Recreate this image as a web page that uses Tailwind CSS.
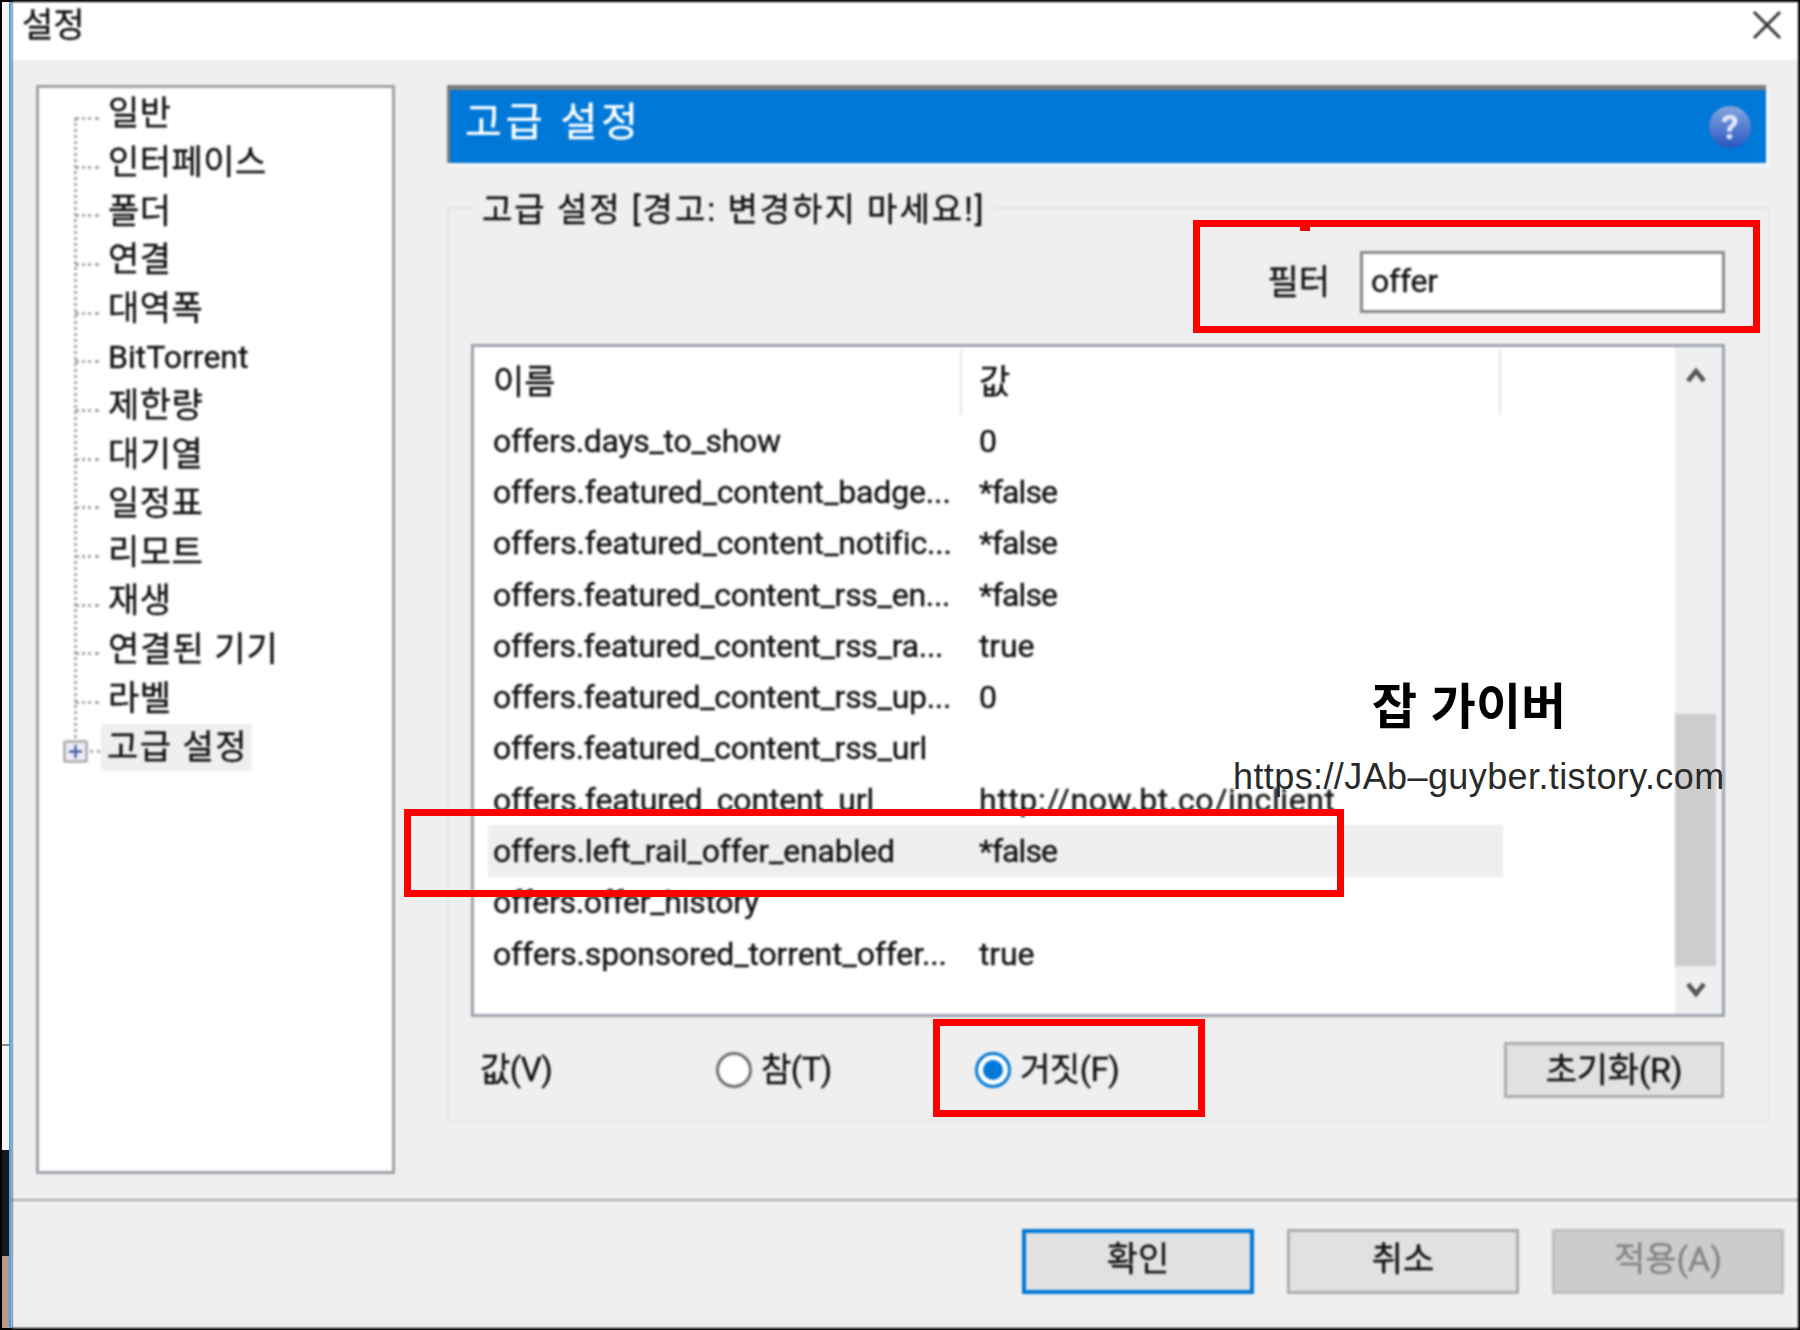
<!DOCTYPE html>
<html lang="ko">
<head>
    <meta charset="UTF-8">
    <title>설정</title>
    <script src="https://cdn.jsdelivr.net/npm/@tailwindcss/browser@4"></script>
</head>
<body class="bg-black">

<div class="relative w-[1800px] h-[1330px] bg-black p-[2px] flex overflow-hidden text-[#111] font-[family-name:Roboto,'Noto_Sans_CJK_KR',sans-serif]">

    <!-- edge of the desktop behind the window -->
    <div class="w-[7px] flex flex-col bg-[#f4f4f4]">
        <div class="h-[1044px] border-b-2 border-[#8a8a8a]"></div>
        <div class="h-[104px]"></div>
        <div class="h-[106px] bg-[#14191c]"></div>
        <div class="flex-1 bg-[#b79a88]"></div>
    </div>
    <div class="w-[3px] bg-[#4a9ee0]"></div>

    <div class="flex-1 flex flex-col bg-[#efefef] blur-[0.8px] [-webkit-text-stroke:0.35px]">
        <!-- title bar -->
        <div class="h-[58px] bg-white flex items-center justify-between pl-[10px] pr-[16px]">
            <span class="text-[34px] leading-none -mt-[12px]">설정</span>
            <svg class="w-[30px] h-[30px] -mt-[12px]" viewBox="0 0 30 30"><path d="M2 2 L28 28 M28 2 L2 28" stroke="#333" stroke-width="3" fill="none"/></svg>
        </div>

        <div class="h-[1139px] flex pl-[24px] pt-[25px]">
            <!-- tree -->
            <div class="w-[359px] h-[1089px] bg-white border-[3px] border-[#9ca2a8] pt-[6px]">
                <ul class="relative text-[34px] tracking-[0.5px]">
                    <li class="absolute left-[35px] top-[24px] h-[620px] border-l-[3px] border-dotted border-[#aaa]"></li>
                    <li class="h-[48.7px] flex items-center pl-[36px]"><span class="w-[24px] border-t-[3px] border-dotted border-[#aaa] mr-[9px]"></span><span class="-mt-[9px]">일반</span></li>
                    <li class="h-[48.7px] flex items-center pl-[36px]"><span class="w-[24px] border-t-[3px] border-dotted border-[#aaa] mr-[9px]"></span><span class="-mt-[9px]">인터페이스</span></li>
                    <li class="h-[48.7px] flex items-center pl-[36px]"><span class="w-[24px] border-t-[3px] border-dotted border-[#aaa] mr-[9px]"></span><span class="-mt-[9px]">폴더</span></li>
                    <li class="h-[48.7px] flex items-center pl-[36px]"><span class="w-[24px] border-t-[3px] border-dotted border-[#aaa] mr-[9px]"></span><span class="-mt-[9px]">연결</span></li>
                    <li class="h-[48.7px] flex items-center pl-[36px]"><span class="w-[24px] border-t-[3px] border-dotted border-[#aaa] mr-[9px]"></span><span class="-mt-[9px]">대역폭</span></li>
                    <li class="h-[48.7px] flex items-center pl-[36px]"><span class="w-[24px] border-t-[3px] border-dotted border-[#aaa] mr-[9px]"></span><span class="-mt-[10px] text-[32px] tracking-normal">BitTorrent</span></li>
                    <li class="h-[48.7px] flex items-center pl-[36px]"><span class="w-[24px] border-t-[3px] border-dotted border-[#aaa] mr-[9px]"></span><span class="-mt-[9px]">제한량</span></li>
                    <li class="h-[48.7px] flex items-center pl-[36px]"><span class="w-[24px] border-t-[3px] border-dotted border-[#aaa] mr-[9px]"></span><span class="-mt-[9px]">대기열</span></li>
                    <li class="h-[48.7px] flex items-center pl-[36px]"><span class="w-[24px] border-t-[3px] border-dotted border-[#aaa] mr-[9px]"></span><span class="-mt-[9px]">일정표</span></li>
                    <li class="h-[48.7px] flex items-center pl-[36px]"><span class="w-[24px] border-t-[3px] border-dotted border-[#aaa] mr-[9px]"></span><span class="-mt-[9px]">리모트</span></li>
                    <li class="h-[48.7px] flex items-center pl-[36px]"><span class="w-[24px] border-t-[3px] border-dotted border-[#aaa] mr-[9px]"></span><span class="-mt-[9px]">재생</span></li>
                    <li class="h-[48.7px] flex items-center pl-[36px]"><span class="w-[24px] border-t-[3px] border-dotted border-[#aaa] mr-[9px]"></span><span class="-mt-[9px] tracking-[1px]">연결된 기기</span></li>
                    <li class="h-[48.7px] flex items-center pl-[36px]"><span class="w-[24px] border-t-[3px] border-dotted border-[#aaa] mr-[9px]"></span><span class="-mt-[9px]">라벨</span></li>
                    <li class="h-[48.7px] flex items-center pl-[24px]">
                        <span class="w-[25px] h-[23px] rounded-[3px] border-[3px] border-[#b4b4b4] bg-[#eceef4] flex items-center justify-center">
                            <svg class="w-[15px] h-[15px]" viewBox="0 0 15 15"><path d="M1 7.5 H14 M7.5 1 V14" stroke="#4a5ba8" stroke-width="2.4"/></svg>
                        </span>
                        <span class="w-[10px] ml-[2px] border-t-[3px] border-dotted border-[#aaa]"></span>
                        <span class="ml-[1px] -mt-[8px] h-[47px] w-[151px] bg-[#efefef] flex items-center pl-[6px]"><span class="tracking-[1.5px] whitespace-nowrap">고급 설정</span></span>
                    </li>
                </ul>
            </div>

            <!-- right side -->
            <div class="ml-[52px] w-[1323px]">
                <div class="w-[1319px] h-[78px] border-t-[5px] border-l-[3px] border-[#7d7d7d] bg-[#0078d7] shadow-[3px_3px_0_#f8f8f8] flex items-center justify-between pl-[15px] pr-[15px]">
                    <span class="text-[40px] text-white tracking-[4px] leading-none -mt-[8px]">고급 설정</span>
                    <span class="w-[42px] h-[42px] rounded-full bg-linear-to-b from-[#86a6e2] to-[#2a55bd] text-[#dfe8fa] text-[34px] font-bold flex items-center justify-center leading-none">?</span>
                </div>

                <div class="mt-[44px] w-[1323px] h-[915px] border-2 border-[#e4e4e4]">
                    <div class="-mt-[20px] ml-[25px] w-fit bg-[#efefef] px-[8px] text-[33px] leading-[38px] tracking-[2px] whitespace-nowrap translate-y-[2px]">고급 설정 [경고: 변경하지 마세요!]</div>

                    <div class="mt-[24px] flex justify-end items-center pr-[43px]">
                        <span class="text-[34px] mr-[30px]">필터</span>
                        <div class="w-[365px] h-[62px] border-[3px] border-[#8a8a8a] bg-white flex items-center pl-[8px] text-[32px] tracking-[-0.2px] pb-[2px]">offer</div>
                    </div>

                    <!-- settings list -->
                    <div class="mt-[31px] ml-[22px] w-[1254px] h-[673px] border-[3px] border-[#9ca2ae] bg-white flex">
                        <div class="w-[1201px] pl-[14px] pt-[3px] text-[32px] tracking-[-0.15px]">
                            <div class="h-[65px] grid grid-cols-[474px_539px] items-center text-[34px] tracking-normal">
                                <span class="h-full pl-[5px] border-r-2 border-[#e6e6e6] flex items-center">이름</span>
                                <span class="h-full pl-[17px] border-r-2 border-[#e6e6e6] flex items-center">값</span>
                            </div>
                            <div class="h-[51.3px] w-[1015px] grid grid-cols-[491px_524px] items-center whitespace-nowrap"><span class="pl-[5px] tracking-[-0.3px]">offers.days_to_show</span><span>0</span></div>
                            <div class="h-[51.3px] w-[1015px] grid grid-cols-[491px_524px] items-center whitespace-nowrap"><span class="pl-[5px]">offers.featured_content_badge...</span><span class="tracking-[-0.9px]">*false</span></div>
                            <div class="h-[51.3px] w-[1015px] grid grid-cols-[491px_524px] items-center whitespace-nowrap"><span class="pl-[5px]">offers.featured_content_notific...</span><span class="tracking-[-0.9px]">*false</span></div>
                            <div class="h-[51.3px] w-[1015px] grid grid-cols-[491px_524px] items-center whitespace-nowrap"><span class="pl-[5px] tracking-[-0.3px]">offers.featured_content_rss_en...</span><span class="tracking-[-0.9px]">*false</span></div>
                            <div class="h-[51.3px] w-[1015px] grid grid-cols-[491px_524px] items-center whitespace-nowrap"><span class="pl-[5px] tracking-[-0.3px]">offers.featured_content_rss_ra...</span><span>true</span></div>
                            <div class="h-[51.3px] w-[1015px] grid grid-cols-[491px_524px] items-center whitespace-nowrap"><span class="pl-[5px] tracking-[-0.3px]">offers.featured_content_rss_up...</span><span>0</span></div>
                            <div class="h-[51.3px] w-[1015px] grid grid-cols-[491px_524px] items-center whitespace-nowrap"><span class="pl-[5px] tracking-[-0.3px]">offers.featured_content_rss_url</span><span></span></div>
                            <div class="h-[51.3px] w-[1015px] grid grid-cols-[491px_524px] items-center whitespace-nowrap"><span class="pl-[5px]">offers.featured_content_url</span><span class="tracking-[0.6px]">http://now.bt.co/inclient</span></div>
                            <div class="h-[51.3px] w-[1015px] grid grid-cols-[491px_524px] items-center whitespace-nowrap bg-[#efefef]"><span class="pl-[5px]">offers.left_rail_offer_enabled</span><span class="tracking-[-0.9px]">*false</span></div>
                            <div class="h-[51.3px] w-[1015px] grid grid-cols-[491px_524px] items-center whitespace-nowrap"><span class="pl-[5px] tracking-[-0.3px]">offers.offer_history</span><span></span></div>
                            <div class="h-[51.3px] w-[1015px] grid grid-cols-[491px_524px] items-center whitespace-nowrap"><span class="pl-[5px]">offers.sponsored_torrent_offer...</span><span>true</span></div>
                        </div>
                        <!-- scrollbar -->
                        <div class="flex-1 bg-[#efefef] flex flex-col">
                            <div class="h-[367px] flex pt-[20px] justify-center pr-[5px]">
                                <svg class="w-[20px] h-[16px]" viewBox="0 0 20 16"><path d="M2 14 L10 4 L18 14" stroke="#555" stroke-width="4.5" fill="none"/></svg>
                            </div>
                            <div class="h-[252px] w-[41px] bg-[#cdcdcd]"></div>
                            <div class="flex-1 flex pt-[16px] justify-center pr-[5px]">
                                <svg class="w-[20px] h-[16px]" viewBox="0 0 20 16"><path d="M2 2 L10 12 L18 2" stroke="#555" stroke-width="4.5" fill="none"/></svg>
                            </div>
                        </div>
                    </div>

                    <!-- value row -->
                    <div class="mt-[25px] flex items-center pl-[31px] pr-[44px] h-[56px] text-[33px] tracking-[-0.5px]">
                        <span class="w-[236px]">값(V)</span>
                        <span class="w-[259px] flex items-center">
                            <span class="w-[36px] h-[36px] rounded-full border-[3px] border-[#707070] bg-white mr-[9px]"></span>참(T)
                        </span>
                        <span class="flex items-center">
                            <span class="w-[36px] h-[36px] rounded-full border-[3px] border-[#0078d7] bg-white mr-[9px] flex items-center justify-center"><span class="w-[20px] h-[20px] rounded-full bg-[#0078d7]"></span></span>거짓(F)
                        </span>
                        <button class="ml-auto w-[220px] h-[56px] bg-[#e1e1e1] border-[3px] border-[#adadad] text-[34px] tracking-[-0.3px]">초기화(R)</button>
                    </div>
                </div>
            </div>
        </div>

        <div class="h-[2px] bg-[#a8a8a8]"></div>

        <!-- dialog buttons -->
        <div class="flex-1 flex justify-end gap-[33px] pt-[28px] pr-[14px] text-[34px] tracking-normal">
            <button class="w-[232px] h-[65px] bg-[#e1e1e1] border-4 border-[#0078d7] pb-[4px]">확인</button>
            <button class="w-[232px] h-[65px] bg-[#e1e1e1] border-[3px] border-[#adadad] pb-[4px]">취소</button>
            <button class="w-[232px] h-[65px] bg-[#cccccc] border-[3px] border-[#bfbfbf] text-[#858585] pb-[4px]">적용(A)</button>
        </div>
    </div>

    <!-- red annotation boxes and the watermark lie over the dialog -->
    <div class="absolute left-[1193px] top-[220px] w-[567px] h-[113px] border-[7px] border-[#ff0000]"></div>
    <div class="absolute left-[1300px] top-[220px] w-[10px] h-[11px] bg-[#ff0000]"></div>
    <div class="absolute left-[404px] top-[809px] w-[940px] h-[88px] border-[7px] border-[#ff0000]"></div>
    <div class="absolute left-[933px] top-[1019px] w-[272px] h-[98px] border-[7px] border-[#ff0000]"></div>
    <div class="absolute left-[1372px] top-[675px] text-[49px] leading-[56px] font-bold text-black font-['Noto_Sans_CJK_KR'] whitespace-nowrap">잡 가이버</div>
    <div class="absolute left-[1233px] top-[755px] text-[36px] leading-[44px] tracking-[0.4px] text-[#2a2a2a] font-['Liberation_Sans'] whitespace-nowrap">https://JAb–guyber.tistory.com</div>
</div>

</body>
</html>
